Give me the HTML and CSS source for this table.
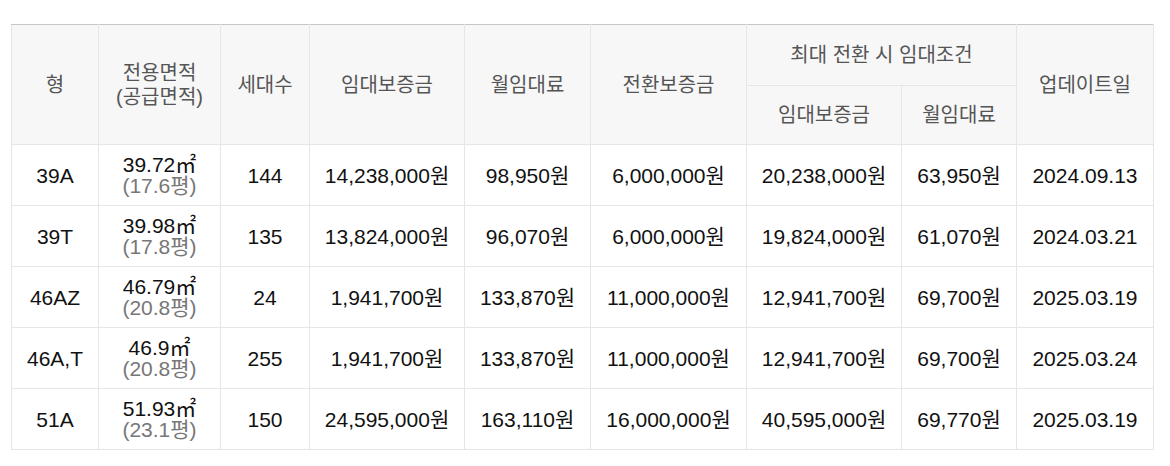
FILE: index.html
```html
<!DOCTYPE html>
<html lang="ko">
<head>
<meta charset="utf-8">
<title>임대조건</title>
<link rel="stylesheet" href="styles.css">
</head>
<body>
<div class="wrap">
<table class="rent">
<colgroup>
<col class="c1"><col class="c2"><col class="c3"><col class="c4"><col class="c5"><col class="c6"><col class="c7"><col class="c8"><col class="c9">
</colgroup>
<thead>
<tr class="h1">
<th rowspan="2">형</th>
<th rowspan="2">전용면적<br>(공급면적)</th>
<th rowspan="2">세대수</th>
<th rowspan="2">임대보증금</th>
<th rowspan="2">월임대료</th>
<th rowspan="2">전환보증금</th>
<th colspan="2">최대 전환 시 임대조건</th>
<th rowspan="2">업데이트일</th>
</tr>
<tr class="h2">
<th>임대보증금</th>
<th>월임대료</th>
</tr>
</thead>
<tbody>
<tr><td>39A</td><td>39.72㎡<br><span class="py">(17.6평)</span></td><td>144</td><td>14,238,000원</td><td>98,950원</td><td>6,000,000원</td><td>20,238,000원</td><td>63,950원</td><td>2024.09.13</td></tr>
<tr><td>39T</td><td>39.98㎡<br><span class="py">(17.8평)</span></td><td>135</td><td>13,824,000원</td><td>96,070원</td><td>6,000,000원</td><td>19,824,000원</td><td>61,070원</td><td>2024.03.21</td></tr>
<tr><td>46AZ</td><td>46.79㎡<br><span class="py">(20.8평)</span></td><td>24</td><td>1,941,700원</td><td>133,870원</td><td>11,000,000원</td><td>12,941,700원</td><td>69,700원</td><td>2025.03.19</td></tr>
<tr><td>46A,T</td><td>46.9㎡<br><span class="py">(20.8평)</span></td><td>255</td><td>1,941,700원</td><td>133,870원</td><td>11,000,000원</td><td>12,941,700원</td><td>69,700원</td><td>2025.03.24</td></tr>
<tr><td>51A</td><td>51.93㎡<br><span class="py">(23.1평)</span></td><td>150</td><td>24,595,000원</td><td>163,110원</td><td>16,000,000원</td><td>40,595,000원</td><td>69,770원</td><td>2025.03.19</td></tr>
</tbody>
</table>
</div>
</body>
</html>
```
FILE: styles.css
```css
html, body {
  margin: 0;
  padding: 0;
  background: #fff;
}
.wrap {
  padding: 24px 0 0 11px;
}
.rent {
  width: 1142px;
  table-layout: fixed;
  border-collapse: collapse;
  font-family: "Liberation Sans", Arial, "Noto Sans CJK KR", sans-serif;
  font-size: 21px;
  color: #111;
  border-top: 1px solid #c8c8c8;
}
.c1 { width: 87px; }
.c2 { width: 122px; }
.c3 { width: 89px; }
.c4 { width: 155px; }
.c5 { width: 126px; }
.c6 { width: 156px; }
.c7 { width: 155px; }
.c8 { width: 115px; }
.c9 { width: 137px; }
.rent th,
.rent td {
  border: 1px solid #e6e6e6;
  text-align: center;
  vertical-align: middle;
  padding: 0 2px;
  line-height: 21px;
}
.rent th {
  background: #f7f7f7;
  color: #555;
  font-weight: normal;
  font-size: 20px;
  line-height: 24px;
}
.rent thead tr:first-child th {
  border-top: 1px solid #c8c8c8;
}
.h1 th { height: 60px; }
.h2 th { height: 58px; }
.rent td {
  height: 60px;
}
.py {
  color: #777;
}
```
